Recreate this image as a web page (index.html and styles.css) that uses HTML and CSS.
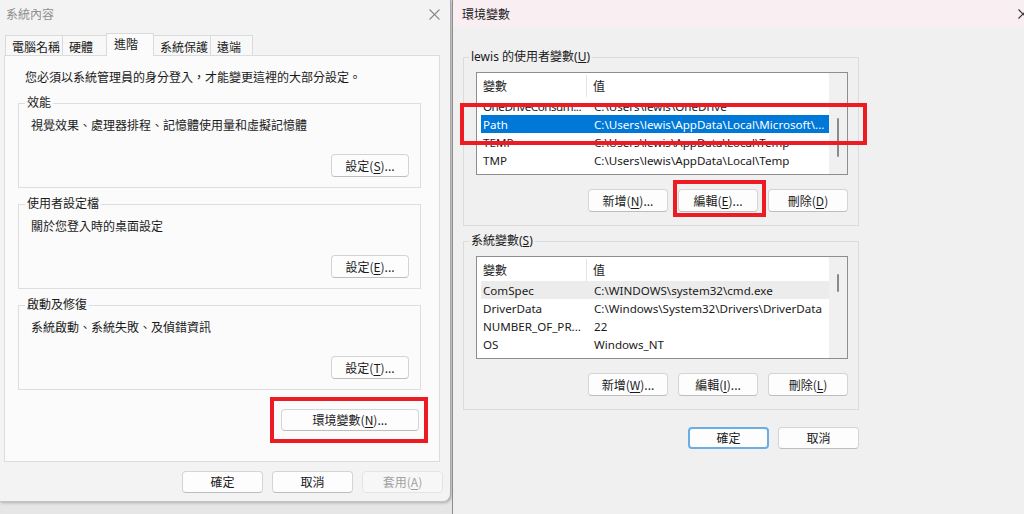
FILE: index.html
```html
<!DOCTYPE html>
<html lang="zh-Hant">
<head>
<meta charset="utf-8">
<title>系統內容 / 環境變數</title>
<link rel="stylesheet" href="styles.css">
</head>
<body>
<div class="desktop">
  <section class="dlg sysprop">
    <header class="titlebar">
      <span class="title">系統內容</span>
      <svg class="x" width="11" height="11" viewBox="0 0 11 11"><path d="M0.5 0.5 L10.5 10.5 M10.5 0.5 L0.5 10.5" stroke="#8a8a8a" stroke-width="1.1" fill="none"/></svg>
    </header>
    <nav class="tabs">
      <span class="tab w57">電腦名稱</span>
      <span class="tab w44">硬體</span>
      <span class="tab active w48">進階</span>
      <span class="tab w56">系統保護</span>
      <span class="tab w43 last">遠端</span>
    </nav>
    <div class="panel">
      <p class="note">您必須以系統管理員的身分登入，才能變更這裡的大部分設定。</p>
      <fieldset class="grp">
        <legend>效能</legend>
        <p class="desc">視覺效果、處理器排程、記憶體使用量和虛擬記憶體</p>
        <div class="btnrow"><button class="btn set">設定(<u>S</u>)...</button></div>
      </fieldset>
      <fieldset class="grp">
        <legend>使用者設定檔</legend>
        <p class="desc">關於您登入時的桌面設定</p>
        <div class="btnrow"><button class="btn set">設定(<u>E</u>)...</button></div>
      </fieldset>
      <fieldset class="grp">
        <legend>啟動及修復</legend>
        <p class="desc">系統啟動、系統失敗、及偵錯資訊</p>
        <div class="btnrow"><button class="btn set">設定(<u>T</u>)...</button></div>
      </fieldset>
      <div class="envrow"><button class="btn env">環境變數(<u>N</u>)...</button></div>
    </div>
    <footer class="foot">
      <button class="btn fb">確定</button>
      <button class="btn fb">取消</button>
      <button class="btn fb disabled">套用(<u>A</u>)</button>
    </footer>
  </section>

  <section class="dlg envvars">
    <header class="titlebar pink">
      <span class="title dark">環境變數</span>
      <svg class="xcut" width="6" height="10" viewBox="0 0 6 10"><path d="M0.5 0.5 L9.5 9.5 M9.5 0.5 L0.5 9.5" stroke="#333" stroke-width="1.1" fill="none"/></svg>
    </header>
    <div class="body">
      <fieldset class="vgrp first">
        <legend>lewis 的使用者變數(<u>U</u>)</legend>
        <div class="list">
          <div class="lv">
            <div class="lvhead"><span class="h1">變數</span><span class="h2">值</span></div>
            <div class="row"><span class="c1 tight">OneDriveConsum...</span><span class="c2">C:\Users\lewis\OneDrive</span></div>
            <div class="row sel"><span class="c1">Path</span><span class="c2">C:\Users\lewis\AppData\Local\Microsoft\...</span></div>
            <div class="row"><span class="c1">TEMP</span><span class="c2">C:\Users\lewis\AppData\Local\Temp</span></div>
            <div class="row"><span class="c1">TMP</span><span class="c2">C:\Users\lewis\AppData\Local\Temp</span></div>
          </div>
          <div class="vscroll"><span class="thumb t1"></span></div>
        </div>
        <div class="vbtns">
          <button class="btn vb">新增(<u>N</u>)...</button>
          <button class="btn vb">編輯(<u>E</u>)...</button>
          <button class="btn vb">刪除(<u>D</u>)</button>
        </div>
      </fieldset>
      <fieldset class="vgrp second">
        <legend>系統變數(<u>S</u>)</legend>
        <div class="list">
          <div class="lv">
            <div class="lvhead"><span class="h1">變數</span><span class="h2">值</span></div>
            <div class="row hover"><span class="c1">ComSpec</span><span class="c2">C:\WINDOWS\system32\cmd.exe</span></div>
            <div class="row"><span class="c1">DriverData</span><span class="c2">C:\Windows\System32\Drivers\DriverData</span></div>
            <div class="row"><span class="c1">NUMBER_OF_PR...</span><span class="c2">22</span></div>
            <div class="row"><span class="c1">OS</span><span class="c2">Windows_NT</span></div>
            <div class="row"><span class="c1">Path</span><span class="c2"></span></div>
          </div>
          <div class="vscroll"><span class="thumb t2"></span></div>
        </div>
        <div class="vbtns">
          <button class="btn vb">新增(<u>W</u>)...</button>
          <button class="btn vb">編輯(<u>I</u>)...</button>
          <button class="btn vb">刪除(<u>L</u>)</button>
        </div>
      </fieldset>
      <div class="okrow">
        <button class="btn ok focus">確定</button>
        <button class="btn ok">取消</button>
      </div>
    </div>
  </section>

  <span class="mark m-env"></span>
  <span class="mark m-path"></span>
  <span class="mark m-edit"></span>
</div>
</body>
</html>
```

FILE: styles.css
```css
* { box-sizing: border-box; }
html, body { margin: 0; padding: 0; }
body {
  width: 1024px;
  height: 514px;
  overflow: hidden;
  background: #e6e6e6;
  font-family: "Noto Sans", "Noto Sans CJK TC", sans-serif;
  font-size: 12px;
  line-height: 16px;
  color: #1a1a1a;
}
.desktop {
  position: relative;
  display: flex;
  align-items: flex-start;
  width: 1024px;
  height: 514px;
}
.dlg { overflow: hidden; }
.sysprop {
  width: 451px;
  height: 502px;
  background: #f3f3f3;
  border-right: 1px solid #a9a9a9;
  border-bottom: 1px solid #c4c4c4;
  border-bottom-right-radius: 8px;
  box-shadow: 1px 1px 3px rgba(0,0,0,0.25);
}
.envvars {
  width: 572px;
  height: 514px;
  margin-left: 1px;
  background: #f0f0f0;
  border-left: 1px solid #8c8c8c;
}
.titlebar {
  height: 27px;
  display: flex;
  align-items: center;
  padding-left: 6px;
  padding-right: 10px;
}
.titlebar .title {
  font-family: "Noto Sans CJK TC", sans-serif;
  color: #8f8f8f;
  padding-top: 1px;
}
.titlebar .x { margin-left: auto; margin-top: 1px; }
.titlebar.pink { background: #f9eef2; padding-left: 9px; padding-right: 0; }
.titlebar .title.dark { color: #1a1a1a; }
.titlebar .xcut { margin-left: auto; }

/* tabs */
.tabs {
  display: flex;
  align-items: flex-end;
  height: 22px;
  margin-top: 6px;
  padding-left: 5px;
}
.tab {
  height: 20px;
  line-height: 20px;
  padding-top: 1px;
  padding-left: 6px;
  border: 1px solid #dadada;
  border-right: none;
  border-bottom: none;
  background: #f8f8f8;
  font-family: "Noto Sans CJK TC", sans-serif;
  white-space: nowrap;
}
.tab.last { border-right: 1px solid #dadada; }
.tab.active {
  position: relative;
  z-index: 1;
  height: 23px;
  margin-bottom: -1px;
  padding-top: 0;
  padding-left: 7px;
  line-height: 20px;
  background: #fbfbfb;
  border-right: 1px solid #dadada;
}
.tab.active + .tab { border-left: none; }
.w57 { width: 57px; }
.w44 { width: 44px; }
.w48 { width: 48px; }
.w56 { width: 56px; }
.w43 { width: 43px; }

.panel {
  margin-left: 4px;
  width: 436px;
  height: 407px;
  border: 1px solid #dcdcdc;
  background: #fbfbfb;
  padding-top: 14px;
}
.note { margin: 0 0 9px 20px; }
.grp {
  margin: 0 0 8px 13px;
  width: 403px;
  padding: 0 11px 10px 6px;
  border: 1px solid #dedede;
  min-inline-size: 0;
}
.grp legend { padding: 0 2px; line-height: 16px; }
.grp .desc { margin: 7px 0 0 6px; }
.btnrow { display: flex; justify-content: flex-end; margin-top: 20px; }

.btn {
  font-family: "Noto Sans CJK TC", sans-serif;
  font-size: 12px;
  line-height: 16px;
  color: #1a1a1a;
  background: #fdfdfd;
  border: 1px solid #d4d4d4;
  border-bottom-color: #bdbdbd;
  border-radius: 4px;
  padding: 0;
  text-align: center;
}
.btn u { text-underline-offset: 2px; }
.set { width: 78px; height: 23px; }
.envrow { display: flex; justify-content: flex-end; padding-right: 20px; margin-top: 19px; }
.env { width: 138px; height: 22px; }
.foot {
  display: flex;
  justify-content: flex-end;
  gap: 9px;
  padding-right: 7px;
  margin-top: 9px;
}
.fb { width: 81px; height: 22px; }
.btn.disabled { color: #a2a2a2; background: #f7f7f7; border-color: #e4e4e4; }

/* env vars dialog */
.body { padding-left: 10px; }
.vgrp {
  width: 396px;
  margin: 0;
  padding: 0 10px 13px 5px;
  border: 1px solid #dcdcdc;
  min-inline-size: 0;
}
.vgrp.first { margin-top: 22px; }
.vgrp.second { margin-top: 7px; }
.vgrp legend { padding: 0 2px; line-height: 16px; }
.list {
  display: grid;
  grid-template-columns: 1fr 18px;
  margin: 7px 0 0 7px;
  width: 372px;
  height: 103px;
  border: 1px solid #8e8e8e;
  background: #fff;
  overflow: hidden;
}
.lv { overflow: hidden; }
.lvhead {
  display: flex;
  height: 24px;
  align-items: flex-start;
}
.lvhead span { height: 22px; line-height: 22px; margin-top: 2px; }
.lvhead .h1 {
  width: 110px;
  padding-left: 6px;
  border-right: 1px solid #e5e5e5;
  font-family: "Noto Sans CJK TC", sans-serif;
}
.lvhead .h2 { padding-left: 6px; font-family: "Noto Sans CJK TC", sans-serif; }
.row {
  display: flex;
  height: 18px;
  line-height: 19px;
  margin-left: 4px;
  white-space: nowrap;
  font-size: 11.6px;
}
.row .c1 { width: 106px; padding-left: 2px; overflow: hidden; }
.row .c1.tight { letter-spacing: -0.45px; }
.row .c2 { padding-left: 7px; overflow: hidden; }
.row.sel { background: #0078d7; color: #fff; }
.row.hover { background: #ececec; }
.vscroll { background: #f0f0f0; position: relative; }
.thumb {
  position: absolute;
  left: 8px;
  width: 2px;
  border-radius: 1px;
  background: #8a8a8a;
}
.thumb.t1 { top: 45px; height: 39px; }
.thumb.t2 { top: 17px; height: 18px; }
.vbtns {
  display: flex;
  justify-content: flex-end;
  gap: 10px;
  margin-top: 14px;
}
.vb { width: 80px; height: 23px; }
.okrow {
  display: flex;
  justify-content: flex-start;
  gap: 9px;
  margin-left: 225px;
  margin-top: 17px;
}
.ok { width: 81px; height: 22px; }
.ok.focus { border: 2px solid #6aaee6; }

/* red annotation boxes */
.mark {
  position: absolute;
  border: 4px solid #ed1c24;
  pointer-events: none;
}
.m-env { left: 270px; top: 397px; width: 158px; height: 46px; }
.m-path { left: 460px; top: 103px; width: 407px; height: 42px; }
.m-edit { left: 673px; top: 180px; width: 93px; height: 37px; }
```
